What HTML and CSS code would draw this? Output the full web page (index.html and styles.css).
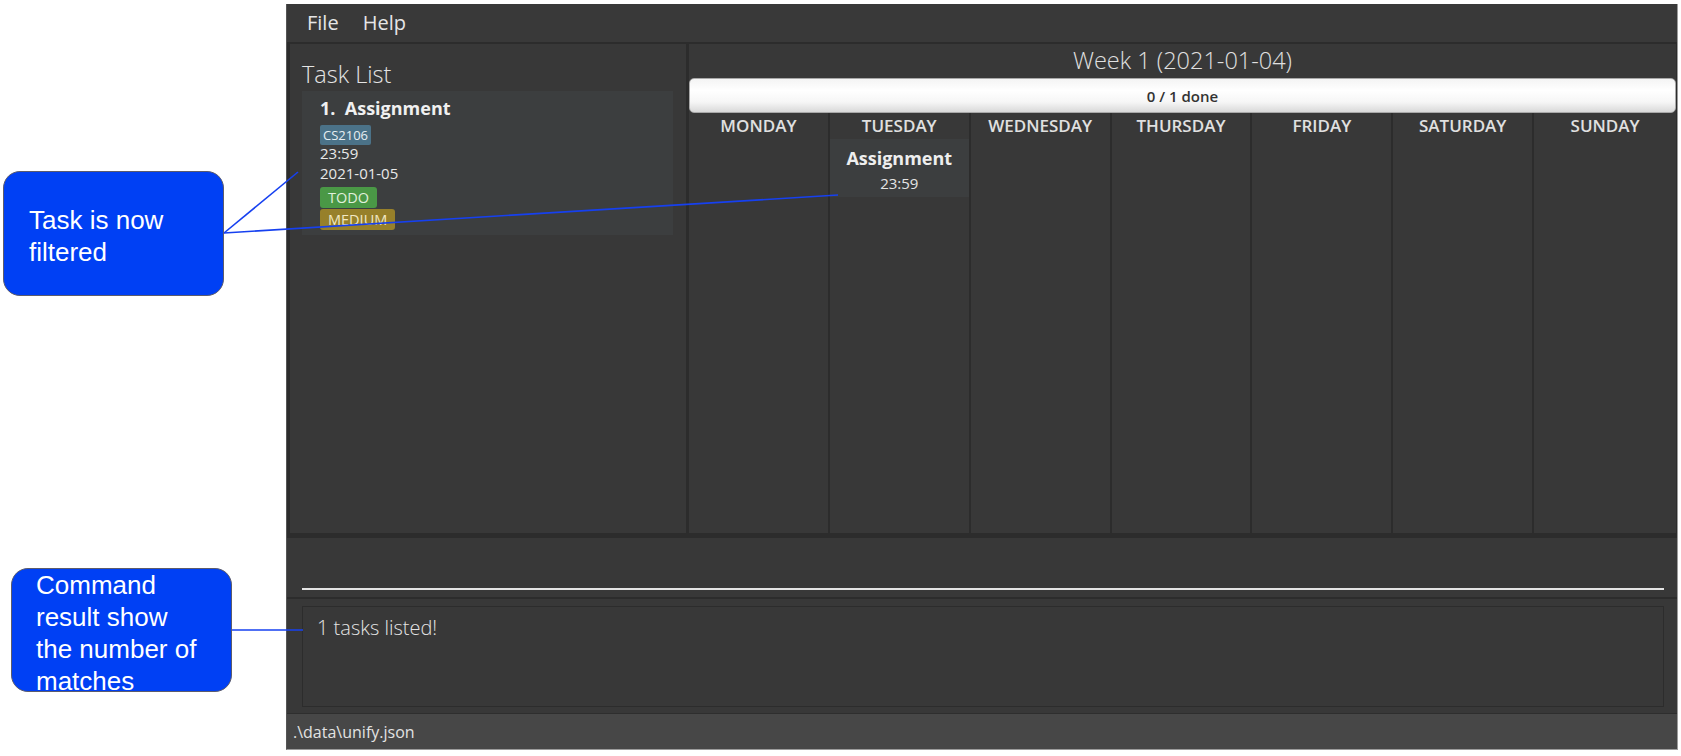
FILE: index.html
```html
<!DOCTYPE html>
<html lang="en">
<head>
<meta charset="utf-8">
<title>Unify</title>
<link rel="stylesheet" href="styles.css">
</head>
<body>
<div class="page">
  <div class="app">
    <div class="menubar">
      <span class="menu-item">File</span>
      <span class="menu-item">Help</span>
    </div>
    <div class="main">
      <section class="tasklist">
        <div class="panel-title">Task List</div>
        <div class="card">
          <div class="card-title">1.&nbsp; Assignment</div>
          <div class="tagrow"><span class="tag">CS2106</span></div>
          <div class="card-line">23:59</div>
          <div class="card-line">2021-01-05</div>
          <div class="pillrow"><span class="pill pill-todo">TODO</span></div>
          <div class="pillrow pillrow-last"><span class="pill pill-medium">MEDIUM</span></div>
        </div>
      </section>
      <section class="calendar">
        <div class="week-title">Week 1 (2021-01-04)</div>
        <div class="progress">0 / 1 done</div>
        <div class="days">
          <div class="day"><div class="day-name">MONDAY</div></div>
          <div class="day">
            <div class="day-name">TUESDAY</div>
            <div class="day-task">
              <div class="day-task-title">Assignment</div>
              <div class="day-task-time">23:59</div>
            </div>
          </div>
          <div class="day"><div class="day-name">WEDNESDAY</div></div>
          <div class="day"><div class="day-name">THURSDAY</div></div>
          <div class="day"><div class="day-name">FRIDAY</div></div>
          <div class="day"><div class="day-name">SATURDAY</div></div>
          <div class="day"><div class="day-name">SUNDAY</div></div>
        </div>
      </section>
    </div>
    <div class="command"><div class="command-field"></div></div>
    <div class="result"><div class="result-box">1 tasks listed!</div></div>
    <div class="statusbar">.\data\unify.json</div>
  </div>

  <div class="callout callout-filter">Task is now<br>filtered</div>
  <div class="callout callout-result">Command<br>result show<br>the number of<br>matches</div>

  <svg class="leaders" width="1681" height="756" viewBox="0 0 1681 756">
    <line x1="224" y1="233" x2="298" y2="172" />
    <line x1="224" y1="233" x2="838" y2="195" />
    <line x1="232" y1="630" x2="303" y2="630" />
  </svg>
</div>
</body>
</html>
```

FILE: styles.css
```css
* { box-sizing: border-box; }

html, body {
  margin: 0;
  padding: 0;
  background: #ffffff;
}

body {
  width: 1681px;
  height: 756px;
  overflow: hidden;
  font-family: "Open Sans", "Segoe UI", "DejaVu Sans", sans-serif;
}

.page {
  position: relative;
  width: 1681px;
  height: 756px;
  display: flex;
  align-items: flex-start;
}

/* ---------- app window ---------- */
.app {
  margin-left: 286px;
  margin-top: 4px;
  width: 1392px;
  display: flex;
  flex-direction: column;
  background: #383838;
  border-left: 1px solid #555555;
  border-right: 1px solid #9c9c9c;
  border-bottom: 1px solid #9c9c9c;
  color: #e2e2e2;
}

.menubar {
  height: 38px;
  display: flex;
  align-items: center;
  padding-left: 8px;
  background: #393939;
}

.menu-item {
  padding: 0 12px;
  font-size: 20px;
  line-height: 38px;
  color: #e6e6e6;
}

.main {
  height: 496px;
  display: flex;
  gap: 3px;
  padding: 2px 1px 5px 3px;
  background: #2c2c2c;
}

/* ---------- task list ---------- */
.tasklist {
  width: 396px;
  flex: none;
  background: #383838;
  padding: 16px 13px 0 12px;
}

.panel-title {
  font-size: 23.5px;
  font-weight: 300;
  line-height: 28px;
  color: #e4e4e4;
}

.card {
  margin-top: 3px;
  background: #3c3e3f;
  padding: 6px 18px 6px 18px;
  display: flex;
  flex-direction: column;
  align-items: flex-start;
}

.card-title {
  font-size: 18px;
  font-weight: 700;
  line-height: 22px;
  color: #f0f0f0;
}

.tagrow {
  margin-top: 4px;
  height: 20px;
}

.tag {
  display: inline-block;
  height: 20px;
  line-height: 20px;
  padding: 0 3px;
  font-size: 13px;
  color: #e6eef2;
  background: #4b7288;
  border-radius: 2px;
}

.card-line {
  font-size: 15px;
  line-height: 20px;
  color: #e8e8e8;
}

.pillrow {
  margin-top: 3px;
  height: 21px;
}

.pillrow-last {
  margin-top: 1px;
}

.pill {
  display: inline-block;
  height: 21px;
  line-height: 21px;
  padding: 0 8px;
  font-size: 14.5px;
  font-weight: 500;
  border-radius: 3px;
}

.pill-todo {
  background: #4a9846;
  color: #e0f0dc;
}

.pill-medium {
  background: #97802a;
  color: #f1e8c4;
}

/* ---------- calendar ---------- */
.calendar {
  flex: 1;
  background: #383838;
  padding-top: 2px;
  display: flex;
  flex-direction: column;
}

.week-title {
  text-align: center;
  font-size: 23.5px;
  font-weight: 300;
  line-height: 28px;
  color: #e0e0e0;
}

.progress {
  margin-top: 4px;
  height: 35px;
  display: flex;
  align-items: center;
  justify-content: center;
  font-size: 15px;
  font-weight: 600;
  color: #333333;
  border: 1px solid #a9a9a9;
  border-radius: 5px;
  background: linear-gradient(#f4f4f4 0%, #ffffff 35%, #f6f6f6 70%, #d9d9d9 100%);
}

.days {
  flex: 1;
  display: grid;
  grid-template-columns: repeat(7, 1fr);
  column-gap: 2px;
  padding-right: 3px;
  background: #2c2c2c;
}

.day {
  background: #383838;
  display: flex;
  flex-direction: column;
}

.day:last-child {
  margin-right: -3px;
}

.day-name {
  height: 26px;
  line-height: 26px;
  text-align: center;
  font-size: 17px;
  font-weight: 600;
  color: #e0e0e0;
}

.day-task {
  background: #3c3e3f;
  padding: 8px 0 4px;
  text-align: center;
}

.day-task-title {
  font-size: 18px;
  font-weight: 700;
  line-height: 22px;
  color: #eeeeee;
}

.day-task-time {
  margin-top: 4px;
  font-size: 15px;
  line-height: 20px;
  color: #e4e4e4;
}

/* ---------- command / result / status ---------- */
.command {
  height: 61px;
  padding: 0 13px 7px 15px;
  border-bottom: 2px solid #2c2c2c;
  background: #383838;
}

.command-field {
  height: 52px;
  border-bottom: 2px solid #e4e4e4;
}

.result {
  height: 114px;
  padding: 7px 13px 6px 15px;
  background: #383838;
}

.result-box {
  height: 101px;
  border: 1px solid #2c2c2c;
  padding: 7px 14px;
  font-size: 20px;
  font-weight: 300;
  line-height: 27px;
  color: #e4e4e4;
}

.statusbar {
  height: 36px;
  border-top: 1px solid #2e2e2e;
  background: #474747;
  padding: 1px 0 0 6px;
  font-size: 16px;
  line-height: 34px;
  color: #e2e2e2;
}

/* ---------- annotations ---------- */
.callout {
  position: absolute;
  background: #0040f4;
  border: 1.5px solid #5c5c6c;
  border-radius: 17px;
  color: #ffffff;
  font-family: "Liberation Sans", Arial, sans-serif;
  font-size: 26px;
  line-height: 32px;
}

.callout-filter {
  left: 3px;
  top: 171px;
  width: 221px;
  height: 125px;
  padding: 32px 0 0 25px;
}

.callout-result {
  left: 11px;
  top: 568px;
  width: 221px;
  height: 124px;
  padding: 0 0 0 24px;
}

.leaders {
  position: absolute;
  left: 0;
  top: 0;
  pointer-events: none;
}

.leaders line {
  stroke: #1640f0;
  stroke-width: 1.6;
}
```
